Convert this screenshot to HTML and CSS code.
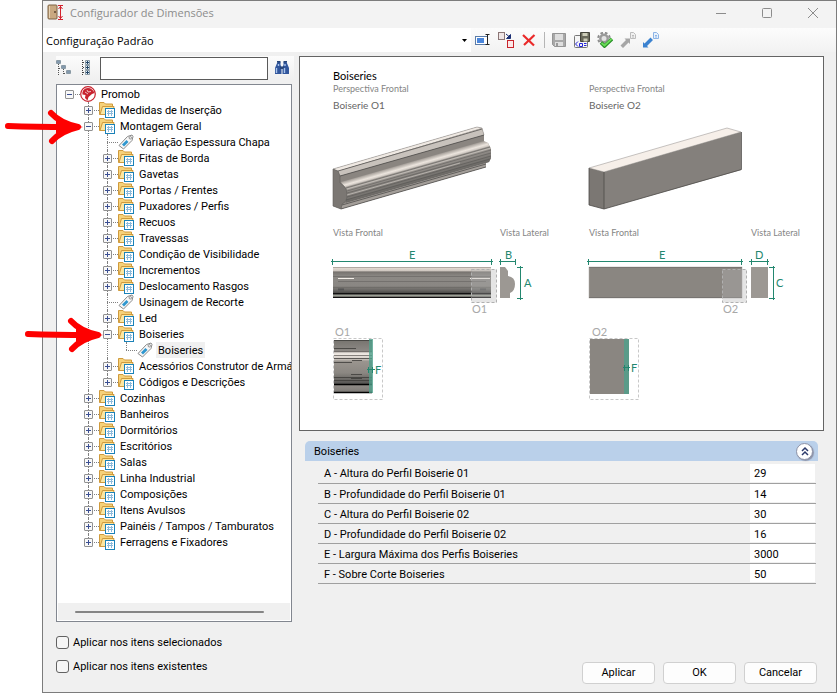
FILE: index.html
```html
<!DOCTYPE html>
<html lang="pt-BR">
<head>
  <meta charset="UTF-8" />
  <meta name="viewport" content="width=device-width, initial-scale=1.0" />
  <link rel="stylesheet" href="styles.css">
  <title>Configurador de Dimensões</title>
</head>
<body>

<!-- Shared icons -->
<svg class="sprite" aria-hidden="true">
  <symbol id="icon-folder" viewBox="0 0 16 16">
    <path d="M.5 12.500V.5H5l1.500 1.500h7v10.500z" fill="#f6d27a" stroke="#cf9a3c"/>
    <path d="M1 12.500L3.500 4.500H15l-1.500 8z" fill="#fbe6a2" stroke="#cf9a3c"/>
    <rect x="6.500" y="6.500" width="9" height="9" fill="#fff" stroke="#1b82b8"/>
    <path d="M8 9.500h6M8 11.500h6M9.500 8v6M12.500 8v6" stroke="#8dbbdc" fill="none"/>
  </symbol>
  <symbol id="icon-tag" viewBox="0 0 16 16">
    <path d="M1 11.500L9.500 2.500L14 1l1 1.500l-1 4L5.500 15z" fill="#f7f7f7" stroke="#8a8a8a"/>
    <circle cx="12.300" cy="3.800" r="1.200" fill="#fff" stroke="#777" stroke-width=".8"/>
    <path d="M4 10.500L8.500 6l2 2L6 12.500z" fill="#2f97cf"/>
  </symbol>
</svg>

<div class="window">
  <header class="titlebar">
    <svg class="app-icon" width="18" height="18" viewBox="0 0 18 18">
      <rect x="1" y="1" width="9" height="14" rx="1" fill="#c9a981" stroke="#7d6244"/>
      <path d="M2.500 2v12" stroke="#e6d2b4"/>
      <circle cx="8" cy="8" r="1" fill="#5b4630"/>
      <path d="M11 1.500h5M11 15.500h5M13.500 2v13M11.500 5l2-2.500l2 2.500M11.500 12l2 2.500l2-2.500" fill="none" stroke="#d3202c"/>
    </svg>
    <h1>Configurador de Dimensões</h1>
    <div class="window-controls">
      <button type="button" aria-label="Minimizar"><svg width="12" height="12" viewBox="0 0 12 12"><path d="M1 6.500h10"/></svg></button>
      <button type="button" aria-label="Maximizar"><svg width="12" height="12" viewBox="0 0 12 12"><rect x="1.500" y="1.500" width="9" height="9" rx="1"/></svg></button>
      <button type="button" aria-label="Fechar"><svg width="12" height="12" viewBox="0 0 12 12"><path d="M1 1l10 10M11 1L1 11"/></svg></button>
    </div>
  </header>

  <div class="toolbar">
    <select class="config-select" aria-label="Configuração">
      <option selected>Configuração Padrão</option>
    </select>
    <button type="button" class="tool" aria-label="Renomear">
      <svg width="16" height="16" viewBox="0 0 16 16">
        <rect x=".5" y="4.500" width="12" height="8" fill="#fff" stroke="#5b7ca8"/>
        <rect x="2" y="6" width="7" height="5" fill="#4a86dc"/>
        <path d="M10.500 2.500h4M10.500 12.500h4M12.500 3v9" stroke="#222" fill="none"/>
      </svg>
    </button>
    <button type="button" class="tool" aria-label="Substituir">
      <svg width="16" height="16" viewBox="0 0 16 16">
        <rect x=".5" y=".5" width="6" height="7" fill="#efe6e6" stroke="#8b7575"/>
        <rect x="9.500" y="8.500" width="6" height="7" fill="#fde8e8" stroke="#c8242b"/>
        <path d="M8 2l3 2.500M12.500 2.500v4h-4z" stroke="#1c2f74" fill="#1c2f74"/>
      </svg>
    </button>
    <button type="button" class="tool" aria-label="Excluir">
      <svg width="16" height="16" viewBox="0 0 16 16"><path d="M2 3l11 10.500M13.500 3L3 13" stroke="#ea2a2a" stroke-width="2.200" fill="none"/></svg>
    </button>
    <span class="separator"></span>
    <button type="button" class="tool" aria-label="Salvar" disabled>
      <svg width="16" height="16" viewBox="0 0 16 16">
        <path d="M1.500 1.500h13v13h-11l-2-2z" fill="#a8a8a8" stroke="#959595"/>
        <rect x="4" y="2" width="8" height="6" fill="#dedede"/>
        <rect x="4" y="10" width="8" height="4" fill="#dedede"/>
        <rect x="5" y="11" width="2" height="3" fill="#999"/>
      </svg>
    </button>
    <button type="button" class="tool" aria-label="Salvar como">
      <svg width="16" height="16" viewBox="0 0 16 16">
        <rect x=".5" y="3.500" width="13" height="12" rx="1" fill="#f5f5f5" stroke="#777"/>
        <path d="M6.500.5h9v9h-9z" fill="#69695a" stroke="#44443a"/>
        <path d="M8.500 1h5v3h-5zM9.500 6.500h4v3h-4z" fill="#cdcdb8"/>
        <path d="M4 9.500l-2.500 2.500L4 14.500M5.500 11.500h3v3h-3zM10 11.500h2.500M10 13.500h2.500" stroke="#2323d8" fill="none"/>
      </svg>
    </button>
    <button type="button" class="tool" aria-label="Validar">
      <svg width="16" height="16" viewBox="0 0 16 16">
        <circle cx="7" cy="6.500" r="5.800" fill="none" stroke="#8d8d8d" stroke-width="2" stroke-dasharray="2.600 2"/>
        <circle cx="7" cy="6.500" r="3.700" fill="#e2e2e2" stroke="#9a9a9a" stroke-width="2.400"/>
        <path d="M4 10.500l3.500 3.500l7.500-7" stroke="#258f25" stroke-width="3.600" fill="none"/>
        <path d="M4.500 11l3 2.500l7-6.500" stroke="#6bdc58" stroke-width="1.800" fill="none"/>
      </svg>
    </button>
    <button type="button" class="tool" aria-label="Exportar" disabled>
      <svg width="16" height="16" viewBox="0 0 16 16">
        <path d="M.5 13.500L6 8L4.500 6.500H10V12L8.500 10.500L3 16z" fill="#a6a6a6"/>
        <path d="M10.500.5h3l2 2v4h-5zM12 3.500h2M12 5h2" fill="#f0f0f0" stroke="#bcbcbc"/>
      </svg>
    </button>
    <button type="button" class="tool" aria-label="Importar">
      <svg width="16" height="16" viewBox="0 0 16 16">
        <path d="M0 15.500V10l1.500 1.500L7.500 5.500L10 8L4 14l1.500 1.500z" fill="#3b82d0"/>
        <path d="M10.500.5h3l2 2v4h-5zM12 3.500h2M12 5h2" fill="#e9f2fc" stroke="#8db4e6"/>
      </svg>
    </button>
  </div>

  <main class="content">
    <aside class="sidebar">
      <div class="searchbar">
        <button type="button" class="tool" aria-label="Recolher tudo">
          <svg width="16" height="16" viewBox="0 0 16 16" fill="none">
            <path d="M2.500 4v12M7.500 9v6M3 8.500h2M8 13.500h2" stroke="#555" stroke-dasharray="1 1"/>
            <path d="M.5.500h4v3h-4zM5.500 5.500h4v3h-4zM10.500 10.500h4v3h-4z" fill="#e4eef5" stroke="#8a9aa5"/>
            <path d="M1 2h3M6 7h3M11 12h3" stroke="#246"/>
          </svg>
        </button>
        <button type="button" class="tool" aria-label="Expandir tudo">
          <svg width="16" height="16" viewBox="0 0 16 16" fill="none">
            <path d="M4.500 0v16M5 2.500h3M5 7.500h3M5 12.500h3" stroke="#444" stroke-dasharray="1 1"/>
            <path d="M7.500.5h4v4h-4zM7.500 5.500h4v4h-4zM7.500 10.500h4v4h-4z" fill="#e4eef5" stroke="#8a9aa5"/>
            <path d="M8 2.500h3M9.500 1v3M8 7.500h3M9.500 6v3M8 12.500h3M9.500 11v3" stroke="#246"/>
          </svg>
        </button>
        <input type="text" class="search" aria-label="Pesquisar">
        <button type="button" class="tool" aria-label="Localizar">
          <svg width="16" height="16" viewBox="0 0 16 16">
            <path d="M3.500 2h3v3l1 2v7H1V8zM9.500 2h3L15 8v6H8.500V7l1-2z" fill="#31569c"/>
            <path d="M3 1h3.500v1.500H3zM9.500 1H13v1.500H9.500zM6 6.500h4V9H6z" fill="#274579"/>
            <path d="M2.500 8v5M10.500 8v5M4.500 4v2M11 4v2" stroke="#a9c4ec" stroke-width="1.400"/>
          </svg>
        </button>
      </div>

      <div class="tree-panel">
        <ul class="tree">
          <li>
            <div class="row"><button type="button" class="toggle open" aria-label="Recolher Promob"></button>
              <svg class="icon" viewBox="0 0 16 16">
                <circle cx="8" cy="8" r="7.300" fill="#fff" stroke="#c8232f" stroke-width="1.200"/>
                <path d="M8 2c-4 0-6 3-5.500 6.500l3 .5l-.5 3l2.500 2.500l1-3.500l3.500-3l2.500-1C13.500 4 11 2 8 2z" fill="#c8232f"/>
                <path d="M7 4l1 2l3-.5M5 6l3 2" stroke="#fff" stroke-width=".7" fill="none"/>
              </svg>
              <span class="label">Promob</span></div>
            <ul>
              <li><div class="row"><button type="button" class="toggle" aria-label="Expandir"></button><svg class="icon"><use href="#icon-folder"/></svg><span class="label">Medidas de Inserção</span></div></li>
              <li>
                <div class="row"><button type="button" class="toggle open" aria-label="Recolher"></button><svg class="icon"><use href="#icon-folder"/></svg><span class="label">Montagem Geral</span></div>
                <ul>
                  <li><div class="row leaf"><svg class="icon"><use href="#icon-tag"/></svg><span class="label">Variação Espessura Chapa</span></div></li>
                  <li><div class="row"><button type="button" class="toggle" aria-label="Expandir"></button><svg class="icon"><use href="#icon-folder"/></svg><span class="label">Fitas de Borda</span></div></li>
                  <li><div class="row"><button type="button" class="toggle" aria-label="Expandir"></button><svg class="icon"><use href="#icon-folder"/></svg><span class="label">Gavetas</span></div></li>
                  <li><div class="row"><button type="button" class="toggle" aria-label="Expandir"></button><svg class="icon"><use href="#icon-folder"/></svg><span class="label">Portas / Frentes</span></div></li>
                  <li><div class="row"><button type="button" class="toggle" aria-label="Expandir"></button><svg class="icon"><use href="#icon-folder"/></svg><span class="label">Puxadores / Perfis</span></div></li>
                  <li><div class="row"><button type="button" class="toggle" aria-label="Expandir"></button><svg class="icon"><use href="#icon-folder"/></svg><span class="label">Recuos</span></div></li>
                  <li><div class="row"><button type="button" class="toggle" aria-label="Expandir"></button><svg class="icon"><use href="#icon-folder"/></svg><span class="label">Travessas</span></div></li>
                  <li><div class="row"><button type="button" class="toggle" aria-label="Expandir"></button><svg class="icon"><use href="#icon-folder"/></svg><span class="label">Condição de Visibilidade</span></div></li>
                  <li><div class="row"><button type="button" class="toggle" aria-label="Expandir"></button><svg class="icon"><use href="#icon-folder"/></svg><span class="label">Incrementos</span></div></li>
                  <li><div class="row"><button type="button" class="toggle" aria-label="Expandir"></button><svg class="icon"><use href="#icon-folder"/></svg><span class="label">Deslocamento Rasgos</span></div></li>
                  <li><div class="row leaf"><svg class="icon"><use href="#icon-tag"/></svg><span class="label">Usinagem de Recorte</span></div></li>
                  <li><div class="row"><button type="button" class="toggle" aria-label="Expandir"></button><svg class="icon"><use href="#icon-folder"/></svg><span class="label">Led</span></div></li>
                  <li>
                    <div class="row"><button type="button" class="toggle open" aria-label="Recolher"></button><svg class="icon"><use href="#icon-folder"/></svg><span class="label">Boiseries</span></div>
                    <ul>
                      <li><div class="row leaf"><svg class="icon"><use href="#icon-tag"/></svg><span class="label selected">Boiseries</span></div></li>
                    </ul>
                  </li>
                  <li><div class="row"><button type="button" class="toggle" aria-label="Expandir"></button><svg class="icon"><use href="#icon-folder"/></svg><span class="label">Acessórios Construtor de Armários</span></div></li>
                  <li><div class="row"><button type="button" class="toggle" aria-label="Expandir"></button><svg class="icon"><use href="#icon-folder"/></svg><span class="label">Códigos e Descrições</span></div></li>
                </ul>
              </li>
              <li><div class="row"><button type="button" class="toggle" aria-label="Expandir"></button><svg class="icon"><use href="#icon-folder"/></svg><span class="label">Cozinhas</span></div></li>
              <li><div class="row"><button type="button" class="toggle" aria-label="Expandir"></button><svg class="icon"><use href="#icon-folder"/></svg><span class="label">Banheiros</span></div></li>
              <li><div class="row"><button type="button" class="toggle" aria-label="Expandir"></button><svg class="icon"><use href="#icon-folder"/></svg><span class="label">Dormitórios</span></div></li>
              <li><div class="row"><button type="button" class="toggle" aria-label="Expandir"></button><svg class="icon"><use href="#icon-folder"/></svg><span class="label">Escritórios</span></div></li>
              <li><div class="row"><button type="button" class="toggle" aria-label="Expandir"></button><svg class="icon"><use href="#icon-folder"/></svg><span class="label">Salas</span></div></li>
              <li><div class="row"><button type="button" class="toggle" aria-label="Expandir"></button><svg class="icon"><use href="#icon-folder"/></svg><span class="label">Linha Industrial</span></div></li>
              <li><div class="row"><button type="button" class="toggle" aria-label="Expandir"></button><svg class="icon"><use href="#icon-folder"/></svg><span class="label">Composições</span></div></li>
              <li><div class="row"><button type="button" class="toggle" aria-label="Expandir"></button><svg class="icon"><use href="#icon-folder"/></svg><span class="label">Itens Avulsos</span></div></li>
              <li><div class="row"><button type="button" class="toggle" aria-label="Expandir"></button><svg class="icon"><use href="#icon-folder"/></svg><span class="label">Painéis / Tampos / Tamburatos</span></div></li>
              <li><div class="row"><button type="button" class="toggle" aria-label="Expandir"></button><svg class="icon"><use href="#icon-folder"/></svg><span class="label">Ferragens e Fixadores</span></div></li>
            </ul>
          </li>
        </ul>
        <div class="scrollbar"><span class="thumb"></span></div>
      </div>

      <div class="options">
        <label><input type="checkbox"> <span>Aplicar nos itens selecionados</span></label>
        <label><input type="checkbox"> <span>Aplicar nos itens existentes</span></label>
      </div>
    </aside>

    <section class="details">
      <div class="preview">
        <svg class="drawing" viewBox="0 0 523 373" role="img" aria-label="Boiseries">
          <defs>
            <linearGradient id="bar" x1="0" y1="0" x2="0" y2="1">
              <stop offset="0" stop-color="#8f8882"/>
              <stop offset=".04" stop-color="#e0d8d0"/>
              <stop offset=".12" stop-color="#cfc7c0"/>
              <stop offset=".16" stop-color="#77736f"/>
              <stop offset=".3" stop-color="#8c8985"/>
              <stop offset=".6" stop-color="#8a8783"/>
              <stop offset=".74" stop-color="#6b6966"/>
              <stop offset=".84" stop-color="#4a4947"/>
              <stop offset="1" stop-color="#8a8783"/>
            </linearGradient>
            <linearGradient id="cove" gradientUnits="userSpaceOnUse" x1="110" y1="101" x2="114" y2="115">
              <stop offset="0" stop-color="#7f7a75"/>
              <stop offset=".3" stop-color="#a8a29c"/>
              <stop offset=".55" stop-color="#ece5de"/>
              <stop offset=".8" stop-color="#b8b2ac"/>
              <stop offset="1" stop-color="#9b9691"/>
            </linearGradient>
            <linearGradient id="roll" gradientUnits="userSpaceOnUse" x1="110" y1="108" x2="116" y2="129">
              <stop offset="0" stop-color="#b5afa9"/>
              <stop offset=".5" stop-color="#85817d"/>
              <stop offset="1" stop-color="#5f5d5a"/>
            </linearGradient>
            <linearGradient id="detail" x1="0" y1="0" x2="0" y2="1">
              <stop offset="0" stop-color="#77746f"/>
              <stop offset=".2" stop-color="#8c8884"/>
              <stop offset=".26" stop-color="#f2ece6"/>
              <stop offset=".35" stop-color="#d5cec8"/>
              <stop offset=".4" stop-color="#9a958f"/>
              <stop offset=".62" stop-color="#8b8782"/>
              <stop offset=".82" stop-color="#565553"/>
              <stop offset=".86" stop-color="#8f8b87"/>
              <stop offset="1" stop-color="#7b7874"/>
            </linearGradient>
          </defs>

          <!-- Boiserie 01 -->
          <text x="33" y="23" class="heading">Boiseries</text>
          <text x="33" y="35" class="caption">Perspectiva Frontal</text>
          <text x="33" y="52" class="name">Boiserie O1</text>

          <path d="M33 112L177 70L182 71L184 78V85L188 86L191 92V101L189 105L186 106V110L41 152L33 149z" fill="#85817d"/>
          <path d="M33 112L177 70L182 71L38 114z" fill="#efe9e3"/>
          <path d="M38 114L182 71L184 78L40 119z" fill="#c8c2bc"/>
          <path d="M40 119L184 78V86L41 127z" fill="#8a8580"/>
          <path d="M41 125L184 84L188 86L191 92L47 134z" fill="url(#cove)"/>
          <path d="M45 130L190 89L191 101L189 105L46 146z" fill="url(#roll)"/>
          <path d="M42 147L186 106V110L41 152z" fill="#a39e99"/>
          <path d="M33 112L38 114L40 119V126L44 129Q47 132 47 138Q47 145 42 147L41 152L33 149z" fill="#7b7773" stroke="#625f5c" stroke-width=".6"/>
          <path d="M38 114L182 72M40 119L184 78M42 148L186 107M41 152L186 110" stroke="#454442" stroke-width=".7" fill="none"/>
          <path d="M46 131L190 90M47 134L191 93M47 136L191 96M47 140L191 99M46 143L190 102" stroke="#454442" stroke-width=".4" fill="none"/>
          <path d="M33 112L177 70L182 71L184 78" stroke="#8a8784" stroke-width=".5" fill="none"/>
          <path d="M47 132L191 91M47 138L160 106" stroke="#d9d3cd" stroke-width=".6" fill="none"/>

          <text x="33" y="179" class="caption">Vista Frontal</text>
          <text x="200" y="179" class="caption">Vista Lateral</text>

          <path d="M31 204.500h162M32.500 202v6M191.500 202v6M199 204.500h17M200.500 202v6M215.500 202v6M217 210.500h6M217 241.500h6M220.500 209v34" class="dim"/>
          <text x="109" y="202" class="dim-label">E</text>
          <text x="205" y="202" class="dim-label">B</text>
          <text x="224" y="230" class="dim-label">A</text>

          <rect x="33" y="210" width="158" height="31" fill="url(#bar)"/>
          <path d="M33 219.500h158M33 230.500h158M38 224.500h148" stroke="#6a6764" stroke-width=".7"/>
          <path d="M38 221.500h16M170 221.500h20" stroke="#f4efe9"/>
          <path d="M33 236.500h158M33 240.500h158" stroke="#111"/>
          <path d="M33 238.500h158" stroke="#9aa094"/>
          <path d="M38 232.500h6M180 232.500h6" stroke="#555" stroke-width="2"/>
          <rect x="171.500" y="212.500" width="25" height="33" class="lens"/>
          <path d="M200 210h5l3 4v5q7 1 7 8q0 7-5 9v5h-10z" fill="#9c9893"/>
          <text x="172" y="256" class="ref">O1</text>

          <text x="35" y="279" class="ref">O1</text>
          <rect x="33.500" y="281.500" width="49" height="61" class="detail-frame"/>
          <rect x="34" y="283" width="38" height="53" fill="url(#detail)"/>
          <path d="M34 283.500h38M34 291.500h22M34 301.500h38M34 305.500h18M52 303.500h10M51 317.500h11M34 320.500h38M51 321.500h11M34 323.500h38" stroke="#3c3b39" stroke-width=".8"/>
          <path d="M34 294.500h38M34 298.500h38" stroke="#5b5855" stroke-width=".7"/>
          <path d="M34 327.500h38M34 335.500h38" stroke="#000" stroke-width="1.600"/>
          <rect x="69" y="282" width="4" height="54" class="cut"/>
          <path d="M67 312.500h8M68.500 310v6M72.500 310v6" class="dim"/>
          <text x="75" y="317" class="dim-label">F</text>

          <!-- Boiserie 02 -->
          <text x="289" y="35" class="caption">Perspectiva Frontal</text>
          <text x="289" y="52" class="name">Boiserie O2</text>

          <path d="M289 111L427 71L441 75L304 115z" fill="#f6efe9" stroke="#8e8b88" stroke-width=".5"/>
          <path d="M304 115L441 75V113L304 152z" fill="#84807c"/>
          <path d="M289 111L304 115V152L289 148z" fill="#7b7773"/>
          <path d="M304 115V152M289 111V148L304 152L441.500 112.500V75" stroke="#4c4a48" stroke-width=".8" fill="none"/>

          <text x="289" y="179" class="caption">Vista Frontal</text>
          <text x="451" y="179" class="caption">Vista Lateral</text>

          <path d="M287 204.500h156M288.500 202v6M441.500 202v6M449 204.500h20M451.500 202v6M467.500 202v6M469 210.500h6M469 241.500h6M473.500 209v34" class="dim"/>
          <text x="359" y="202" class="dim-label">E</text>
          <text x="455" y="202" class="dim-label">D</text>
          <text x="476" y="230" class="dim-label">C</text>

          <rect x="289" y="210" width="153" height="31" fill="#8a8681" stroke="#aaa7a4" stroke-width=".5"/>
          <path d="M289 210.500h153M289 240.500h153" stroke="#6c6966" stroke-width=".7"/>
          <rect x="422.500" y="212.500" width="24" height="33" class="lens"/>
          <rect x="451" y="210" width="17" height="31" fill="#9c9893"/>
          <text x="423" y="256" class="ref">O2</text>

          <text x="292" y="279" class="ref">O2</text>
          <rect x="289.500" y="281.500" width="49" height="61" class="detail-frame"/>
          <rect x="290" y="282" width="39" height="55" fill="#8a8681"/>
          <rect x="324" y="282" width="5" height="55" class="cut"/>
          <path d="M323 310.500h7M324.500 308v6M328.500 308v6" class="dim"/>
          <text x="331" y="315" class="dim-label">F</text>
        </svg>
      </div>

      <section class="group">
        <div class="group-header">
          <h2>Boiseries</h2>
          <button type="button" class="collapse" aria-label="Recolher grupo">
            <svg width="10" height="10" viewBox="0 0 10 10"><path d="M2 5l3-3l3 3M2 9l3-3l3 3"/></svg>
          </button>
        </div>
        <table class="fields">
          <tr><th scope="row"><label for="field-a">A - Altura do Perfil Boiserie 01</label></th><td><input type="text" id="field-a" value="29"></td></tr>
          <tr><th scope="row"><label for="field-b">B - Profundidade do Perfil Boiserie 01</label></th><td><input type="text" id="field-b" value="14"></td></tr>
          <tr><th scope="row"><label for="field-c">C - Altura do Perfil Boiserie 02</label></th><td><input type="text" id="field-c" value="30"></td></tr>
          <tr><th scope="row"><label for="field-d">D - Profundidade do Perfil Boiserie 02</label></th><td><input type="text" id="field-d" value="16"></td></tr>
          <tr><th scope="row"><label for="field-e">E - Largura Máxima dos Perfis Boiseries</label></th><td><input type="text" id="field-e" value="3000"></td></tr>
          <tr><th scope="row"><label for="field-f">F - Sobre Corte Boiseries</label></th><td><input type="text" id="field-f" value="50"></td></tr>
        </table>
      </section>

      <footer class="actions">
        <button type="button">Aplicar</button>
        <button type="button">OK</button>
        <button type="button">Cancelar</button>
      </footer>
    </section>
  </main>
</div>

<!-- Red arrows over the tree -->
<svg class="arrow arrow-first" width="80" height="38" viewBox="0 0 80 38" aria-hidden="true">
  <path d="M4 18Q30 19 66 19M47 5Q56 15 74 19Q57 23 48 33"/>
  <path class="tip" d="M52 12L79 19L52 26z"/>
</svg>
<svg class="arrow arrow-second" width="80" height="38" viewBox="0 0 80 38" aria-hidden="true">
  <path d="M4 18Q30 19 66 19M47 5Q56 15 74 19Q57 23 48 33"/>
  <path class="tip" d="M52 12L79 19L52 26z"/>
</svg>

</body>
</html>
```

FILE: styles.css
```css
* {
  box-sizing: border-box;
}

body {
  margin: 0;
  min-height: 100vh;
  padding-left: 42px;
  display: flex;
  position: relative;
  background: #fff;
  color: #000;
  font-family: Roboto, "Liberation Sans", Arial, sans-serif;
  font-size: 11px;
  line-height: 16px;
}

button, input, select {
  font: inherit;
  color: inherit;
  margin: 0;
}

button {
  padding: 0;
}

.sprite {
  position: absolute;
  width: 0;
  height: 0;
}

.window {
  flex: 1;
  min-width: 0;
  display: flex;
  flex-direction: column;
  border: 1px solid #7c7c7c;
  background: #f0f0f0;
}

/* Title bar */
.titlebar {
  display: flex;
  align-items: center;
  height: 27px;
  padding: 0 0 3px 4px;
  background: #f3f3f3;
}

.titlebar h1 {
  flex: 1;
  margin: 0 0 0 5px;
  font-family: "Open Sans", "Noto Sans", sans-serif;
  font-size: 11px;
  font-weight: 400;
  color: #8c8c8c;
}

.window-controls {
  display: flex;
}

.window-controls button {
  width: 46px;
  height: 24px;
  border: none;
  background: none;
}

.window-controls svg {
  display: block;
  margin: auto;
  fill: none;
  stroke: #8c8c8c;
}

/* Main toolbar */
.toolbar {
  display: flex;
  align-items: center;
  height: 24px;
  background: linear-gradient(#fcfcfc, #f2f2f2);
}

.config-select {
  flex: 0 1 428px;
  min-width: 0;
  height: 24px;
  padding: 2px 16px 0 3px;
  border: none;
  appearance: none;
  background: #fff url("data:image/svg+xml,%3Csvg xmlns='http://www.w3.org/2000/svg' width='5' height='3'%3E%3Cpath d='M0 0h5L2.500 3z'/%3E%3C/svg%3E") no-repeat right 4px center;
  font-family: "Open Sans", "Noto Sans", sans-serif;
  font-size: 11px;
}

.tool {
  flex: none;
  display: flex;
  align-items: center;
  justify-content: center;
  width: 23px;
  height: 22px;
  border: none;
  background: none;
}

.separator {
  width: 1px;
  height: 16px;
  margin: 0 2px 0 4px;
  background: #b5b5b5;
}

/* Content */
.content {
  flex: 1;
  display: flex;
  padding-top: 4px;
}

.sidebar {
  flex: none;
  display: flex;
  flex-direction: column;
  width: 256px;
  padding: 0 7px 18px 13px;
}

.searchbar {
  display: flex;
  align-items: center;
  gap: 6px;
  height: 24px;
  margin-right: -2px;
  padding-right: 4px;
  background: linear-gradient(#fcfcfc, #f0f0f0);
}

.searchbar .tool {
  width: 16px;
}

.search {
  flex: 1;
  min-width: 0;
  height: 23px;
  padding: 0 4px;
  border: 1px solid #5a5a5a;
  background: #fff;
}

/* Tree */
.tree-panel {
  flex: 1;
  display: flex;
  flex-direction: column;
  margin: 4px 0 12px;
  padding: 1px;
  border: 1px solid #828790;
  background: #fff;
  overflow: hidden;
}

.tree, .tree ul {
  list-style: none;
  margin: 0;
  padding: 0;
}

.tree {
  flex: 1;
  padding-left: 7px;
}

.tree ul {
  padding-left: 19px;
}

.tree li {
  position: relative;
}

.tree ul li::before {
  content: "";
  position: absolute;
  left: 4px;
  top: 0;
  bottom: 0;
  border-left: 1px dotted #808080;
}

.tree ul li:last-child::before {
  bottom: auto;
  height: 8px;
}

.row {
  position: relative;
  display: flex;
  align-items: center;
  height: 16px;
  white-space: nowrap;
}

.row.leaf {
  padding-left: 15px;
}

.row::before {
  content: "";
  position: absolute;
  left: 4px;
  top: 8px;
  width: 11px;
  border-top: 1px dotted #808080;
}

.toggle {
  position: relative;
  flex: none;
  width: 9px;
  height: 9px;
  margin-right: 6px;
  border: 1px solid #919191;
  border-radius: 1px;
  background:
    linear-gradient(#3b4f92, #3b4f92) center / 5px 1px no-repeat,
    linear-gradient(#3b4f92, #3b4f92) center / 1px 5px no-repeat,
    #f8f8f8;
}

.toggle.open {
  background:
    linear-gradient(#3b4f92, #3b4f92) center / 5px 1px no-repeat,
    #f8f8f8;
}

.icon {
  position: relative;
  flex: none;
  width: 16px;
  height: 16px;
  margin-right: 3px;
}

.label {
  height: 16px;
  padding: 1px 2px 0;
}

.label.selected {
  background: #f0f0f0;
}

.scrollbar {
  display: flex;
  align-items: center;
  height: 17px;
  padding: 0 26px 0 17px;
  background: #f0f0f0;
}

.thumb {
  flex: 1;
  height: 2px;
  border-radius: 1px;
  background: #858585;
}

.options {
  display: flex;
  flex-direction: column;
  gap: 8px;
}

.options label {
  display: flex;
  align-items: center;
  gap: 4px;
  height: 16px;
}

.options span {
  padding-top: 2px;
}

.options input {
  appearance: none;
  width: 13px;
  height: 13px;
  border: 1px solid #626262;
  border-radius: 3px;
  background: #f6f6f6;
}

.options input:checked {
  background: #0067c0;
}

/* Details */
.details {
  flex: 1;
  min-width: 0;
  display: flex;
  flex-direction: column;
  padding-right: 12px;
}

.preview {
  border: 1px solid #646464;
  background: #fff;
}

.drawing {
  display: block;
  width: 100%;
  font-family: Lato, "Open Sans", sans-serif;
}

.heading {
  font-size: 11px;
}

.caption {
  font-size: 9px;
  fill: #858585;
}

.name {
  font-size: 10px;
  fill: #666;
}

.ref {
  font-size: 11px;
  fill: #a8a8a8;
}

.dim {
  fill: none;
  stroke: #23876f;
}

.dim-label {
  font-size: 11px;
  fill: #23876f;
}

.lens {
  fill: #b4b4b4;
  fill-opacity: .35;
  stroke: #b0b0b0;
  stroke-dasharray: 3 2;
}

.detail-frame {
  fill: none;
  stroke: #c8c8c8;
  stroke-dasharray: 3 2;
}

.cut {
  fill: #4fa08b;
  fill-opacity: .8;
}

.group {
  margin: 10px 6px 0;
}

.group-header {
  display: flex;
  align-items: center;
  justify-content: space-between;
  height: 20px;
  padding: 0 5px 0 9px;
  border-radius: 5px 5px 0 0;
  background: #bad0ea;
}

.group-header h2 {
  margin: 0;
  padding-top: 2px;
  font-size: 11px;
  font-weight: 400;
}

.collapse {
  display: flex;
  align-items: center;
  justify-content: center;
  width: 17px;
  height: 17px;
  border: 1px solid #8d93a8;
  border-radius: 50%;
  background: #fff;
  box-shadow: 1px 1px 1px #8d93a8;
}

.collapse svg {
  fill: none;
  stroke: #2c3a6b;
  stroke-width: 1.5;
}

.fields {
  width: calc(100% - 15px);
  margin: 2px 2px 0 13px;
  border-collapse: collapse;
}

.fields tr {
  height: 20px;
  border-bottom: 1px solid #a0a0a0;
}

.fields th {
  padding: 3px 6px 0;
  font-weight: 400;
  text-align: left;
}

.fields td {
  width: 66px;
  padding: 0;
}

.fields input {
  display: block;
  width: 65px;
  height: 18px;
  padding: 2px 4px 0;
  border: none;
  background: #fff;
}

.actions {
  display: flex;
  justify-content: flex-end;
  gap: 8px;
  margin-top: auto;
  padding: 0 7px 8px 0;
}

.actions button {
  width: 73px;
  height: 22px;
  border: 1px solid #d0d0d0;
  border-radius: 4px;
  background: #fdfdfd;
}

/* Arrows */
.arrow {
  position: absolute;
  fill: none;
  stroke: #fe0000;
  stroke-width: 6;
  stroke-linecap: round;
  stroke-linejoin: round;
}

.arrow .tip {
  fill: #fe0000;
  stroke: none;
}

.arrow-first {
  left: 4px;
  top: 108px;
}

.arrow-second {
  left: 24px;
  top: 316px;
}
```
